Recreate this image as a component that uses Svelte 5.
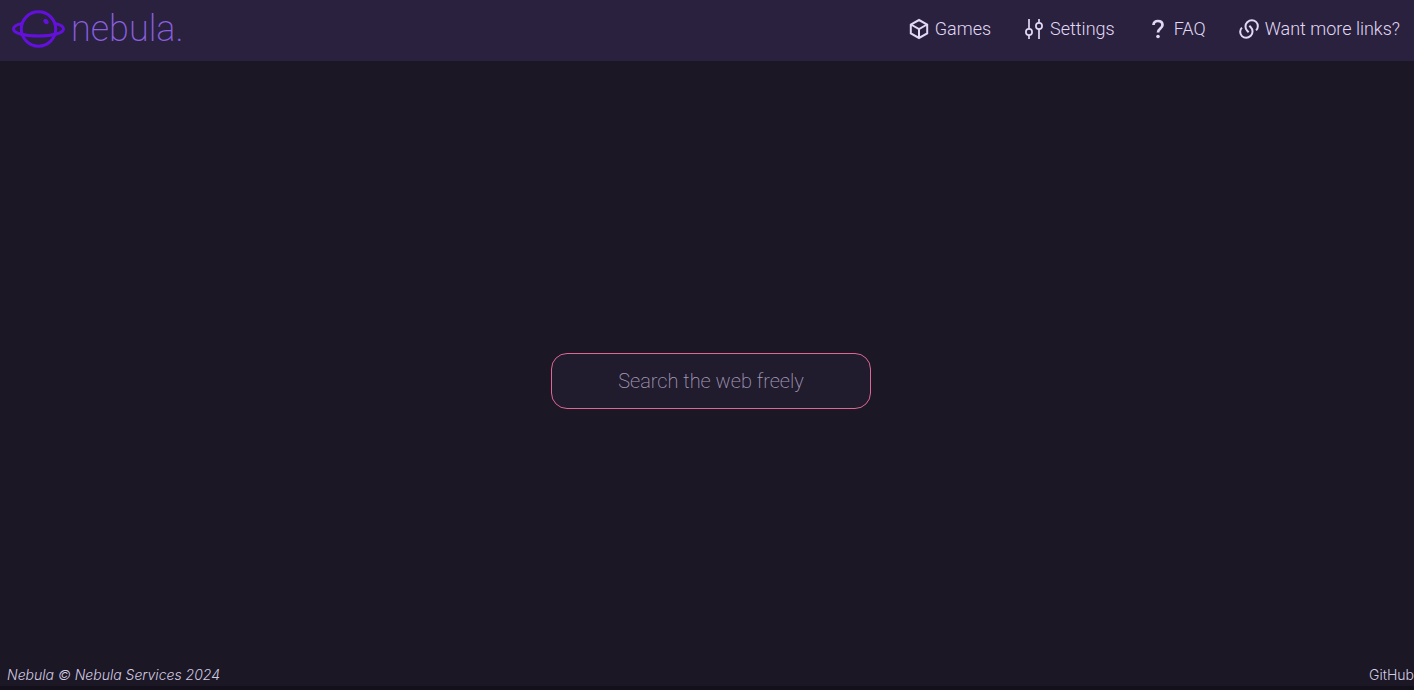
<script>
  let query = '';
</script>

<style>
  :global(body) {
    margin: 0;
    background-color: #1b1724;
  }

  .page {
    display: flex;
    flex-direction: column;
    min-height: 100vh;
    box-sizing: border-box;
    border-bottom: 4px solid #14101b;
    overflow-x: hidden;
    font-family: Roboto, sans-serif;
    font-weight: 300;
    color: #e0d8f5;
  }

  a {
    color: inherit;
    text-decoration: none;
  }

  .header {
    display: flex;
    flex-wrap: wrap;
    align-items: center;
    justify-content: space-between;
    min-height: 61px;
    padding: 0 14px 0 10px;
    background-color: #29213d;
  }

  .brand {
    display: flex;
    align-items: center;
    gap: 5px;
    height: 57px;
    padding-bottom: 4px;
    font-size: 36px;
    font-weight: 200;
    color: #8a5fe0;
  }

  .planet {
    width: 56px;
    height: 40px;
    fill: none;
    stroke: #6410dc;
    stroke-width: 3;
    stroke-linecap: round;
  }

  .nav {
    display: flex;
    flex-wrap: wrap;
    gap: 31px;
    padding-bottom: 4px;
    font-size: 18px;
  }

  .nav-link {
    display: flex;
    align-items: center;
    gap: 4px;
  }

  .icon {
    width: 24px;
    height: 24px;
    fill: none;
    stroke: currentColor;
    stroke-width: 2;
  }

  .nav-link:hover,
  .footer a:hover {
    color: #eb6f92;
  }

  .main {
    display: flex;
    flex: 1;
    align-items: center;
    justify-content: center;
    padding: 34px 0 0 8px;
  }

  .search {
    width: 320px;
    height: 56px;
    box-sizing: border-box;
    padding: 0 16px;
    border: 1px solid #df6793;
    border-radius: 16px;
    outline: none;
    background-color: #211b2e;
    color: #e0d8f5;
    font-family: inherit;
    font-size: 20px;
    font-weight: 200;
    text-align: center;
  }

  .search::placeholder {
    color: #a59bb9;
    opacity: 1;
  }

  .footer {
    display: flex;
    justify-content: space-between;
    padding: 0 0 2px 7px;
    font-family: Inter, sans-serif;
    font-size: 14px;
    line-height: 18px;
    color: #d3cbe3;
  }

  .copyright {
    font-style: italic;
  }
</style>

<div class="page">
  <header class="header">
    <a class="brand" href="/">
      <svg class="planet" viewBox="0 0 56 40" aria-hidden="true">
        <circle cx="28.5" cy="20" r="17.2" />
        <path d="M12 14.5C7 15.5 3.5 17.5 3.5 20C3.5 24 14 27 28.5 27S53.5 24 53.5 20C53.5 17.5 50 15.5 45 14.5" />
        <ellipse cx="36" cy="12.5" rx="2.2" ry="3" transform="rotate(-40 36 12.5)" fill="#6410dc" stroke="none" />
      </svg>
      <span>nebula.</span>
    </a>
    <nav class="nav">
      <a class="nav-link" href="/games">
        <svg class="icon" viewBox="0 0 24 24" aria-hidden="true">
          <path d="M12 3l8.2 4.5v9L12 21l-8.2-4.5v-9zM4 7.5l8 4.5 8-4.5M12 12v9" />
        </svg>
        Games
      </a>
      <a class="nav-link" href="/settings">
        <svg class="icon" viewBox="0 0 24 24" aria-hidden="true">
          <g stroke-width="1.7">
            <circle cx="7" cy="15" r="3.1" />
            <circle cx="17" cy="9" r="3.1" />
            <path d="M7 2v10M7 18v4M17 2v4M17 12v10" />
          </g>
        </svg>
        Settings
      </a>
      <a class="nav-link" href="/faq">
        <svg class="icon" viewBox="0 0 24 24" aria-hidden="true">
          <path d="M7.5 8C7.5 5.5 9.5 4 11.8 4C14.5 4 16.5 5.5 16.5 8C16.5 11.5 12 11.5 12 15.5" stroke-width="2.7" />
          <circle cx="12" cy="19.5" r="1.8" fill="currentColor" stroke="none" />
        </svg>
        FAQ
      </a>
      <a class="nav-link" href="/links">
        <svg class="icon" viewBox="0 0 24 24" aria-hidden="true">
          <path
            fill="currentColor"
            stroke="none"
            d="M13.061 8.111l1.414 1.414a7 7 0 0 1 0 9.9l-.354.353a7 7 0 0 1-9.9-9.9l1.415 1.415a5 5 0 1 0 7.071 7.071l.354-.354a5 5 0 0 0 0-7.07l-1.415-1.415 1.415-1.414zM19.778 14.121l-1.414-1.414a5 5 0 1 0-7.071-7.071l-.354.354a5 5 0 0 0 0 7.07l1.415 1.415-1.415 1.414-1.414-1.414a7 7 0 0 1 0-9.9l.354-.353a7 7 0 0 1 9.9 9.9z"
          />
        </svg>
        Want more links?
      </a>
    </nav>
  </header>

  <main class="main">
    <input
      class="search"
      type="text"
      aria-label="Search the web freely"
      placeholder="Search the web freely"
      bind:value={query}
    />
  </main>

  <footer class="footer">
    <span class="copyright">Nebula © Nebula Services 2024</span>
    <a href="https://github.com">GitHub</a>
  </footer>
</div>
